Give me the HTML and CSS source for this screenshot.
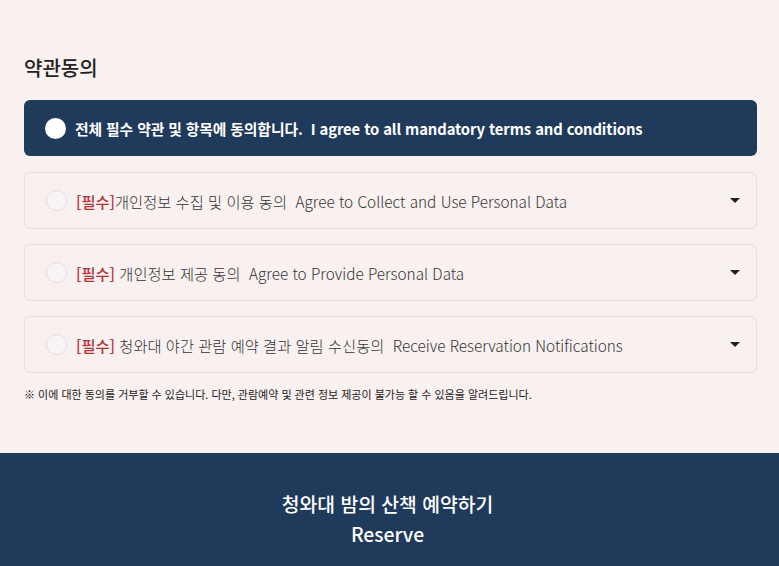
FILE: index.html
```html
<!DOCTYPE html>
<html lang="ko">

<head>
    <meta charset="UTF-8">
    <meta name="viewport" content="width=device-width, initial-scale=1.0">
    <title>청와대 밤의 산책 예약</title>
    <link rel="stylesheet" href="styles.css">
</head>

<body>

    <!-- Terms -->
    <section class="terms">
        <h2 class="terms-title">약관동의</h2>

        <div class="agree-all">
            <span class="check check-all"></span>
            <span class="agree-all-text">전체 필수 약관 및 항목에 동의합니다.&nbsp; I agree to all mandatory terms and conditions</span>
        </div>

        <ul class="term-list">
            <li class="term-item">
                <span class="check"></span>
                <span class="term-text"><em class="required">[필수]</em>개인정보 수집 및 이용 동의&nbsp; Agree to Collect and Use Personal Data</span>
                <span class="caret"></span>
            </li>
            <li class="term-item">
                <span class="check"></span>
                <span class="term-text"><em class="required">[필수]</em> 개인정보 제공 동의&nbsp; Agree to Provide Personal Data</span>
                <span class="caret"></span>
            </li>
            <li class="term-item">
                <span class="check"></span>
                <span class="term-text"><em class="required">[필수]</em> 청와대 야간 관람 예약 결과 알림 수신동의&nbsp; Receive Reservation Notifications</span>
                <span class="caret"></span>
            </li>
        </ul>

        <p class="note">※ 이에 대한 동의를 거부할 수 있습니다. 다만, 관람예약 및 관련 정보 제공이 불가능 할 수 있음을 알려드립니다.</p>
    </section>

    <!-- Reserve -->
    <footer class="reserve">
        <p>청와대 밤의 산책 예약하기</p>
        <p>Reserve</p>
    </footer>

</body>
</html>
```

FILE: styles.css
```css
/* General Reset */
* {
    margin: 0;
    padding: 0;
    box-sizing: border-box;
}

body {
    font-family: "Noto Sans CJK KR", "Noto Sans", sans-serif;
    color: #444;
    background-color: #f9f0f0;
}

/* Terms */
.terms {
    padding: 54px 22px 51px 24px;
}

.terms-title {
    font-size: 20px;
    font-weight: 500;
    line-height: 28px;
    color: #222;
    margin-bottom: 18px;
}

.agree-all {
    display: flex;
    align-items: center;
    height: 56px;
    padding: 0 21px;
    background-color: #203a5c;
    border-radius: 6px;
    color: #fff;
    margin-bottom: 16px;
}

.agree-all-text {
    font-size: 14.8px;
    font-weight: 700;
    letter-spacing: -0.1px;
}

.check {
    flex: none;
    width: 21px;
    height: 21px;
    border-radius: 50%;
    border: 1px solid #e2dcdc;
    background-color: #faf3f3;
    margin-right: 9px;
}

    .check-all {
        border: none;
        background-color: #fff;
    }

.term-list {
    list-style-type: none;
    display: flex;
    flex-direction: column;
    gap: 15px;
}

.term-item {
    display: flex;
    align-items: center;
    height: 57px;
    padding: 0 16px 0 21px;
    border: 1px solid #e6dfdf;
    border-radius: 6px;
}

.term-text {
    flex: 1;
    font-size: 15.3px;
    font-weight: 300;
    color: #333;
}

.required {
    font-style: normal;
    font-weight: 500;
    color: #b3333b;
}

.caret {
    width: 0;
    height: 0;
    border-left: 5px solid transparent;
    border-right: 5px solid transparent;
    border-top: 5px solid #1a2230;
}

.note {
    margin-top: 13px;
    font-size: 11px;
    line-height: 16px;
    color: #222;
}

/* Reserve Footer */
.reserve {
    background-color: #203a5c;
    color: #fff;
    text-align: center;
    padding: 36px 4px 32px 0;
    font-size: 19.3px;
    font-weight: 500;
    line-height: 30px;
}
```
